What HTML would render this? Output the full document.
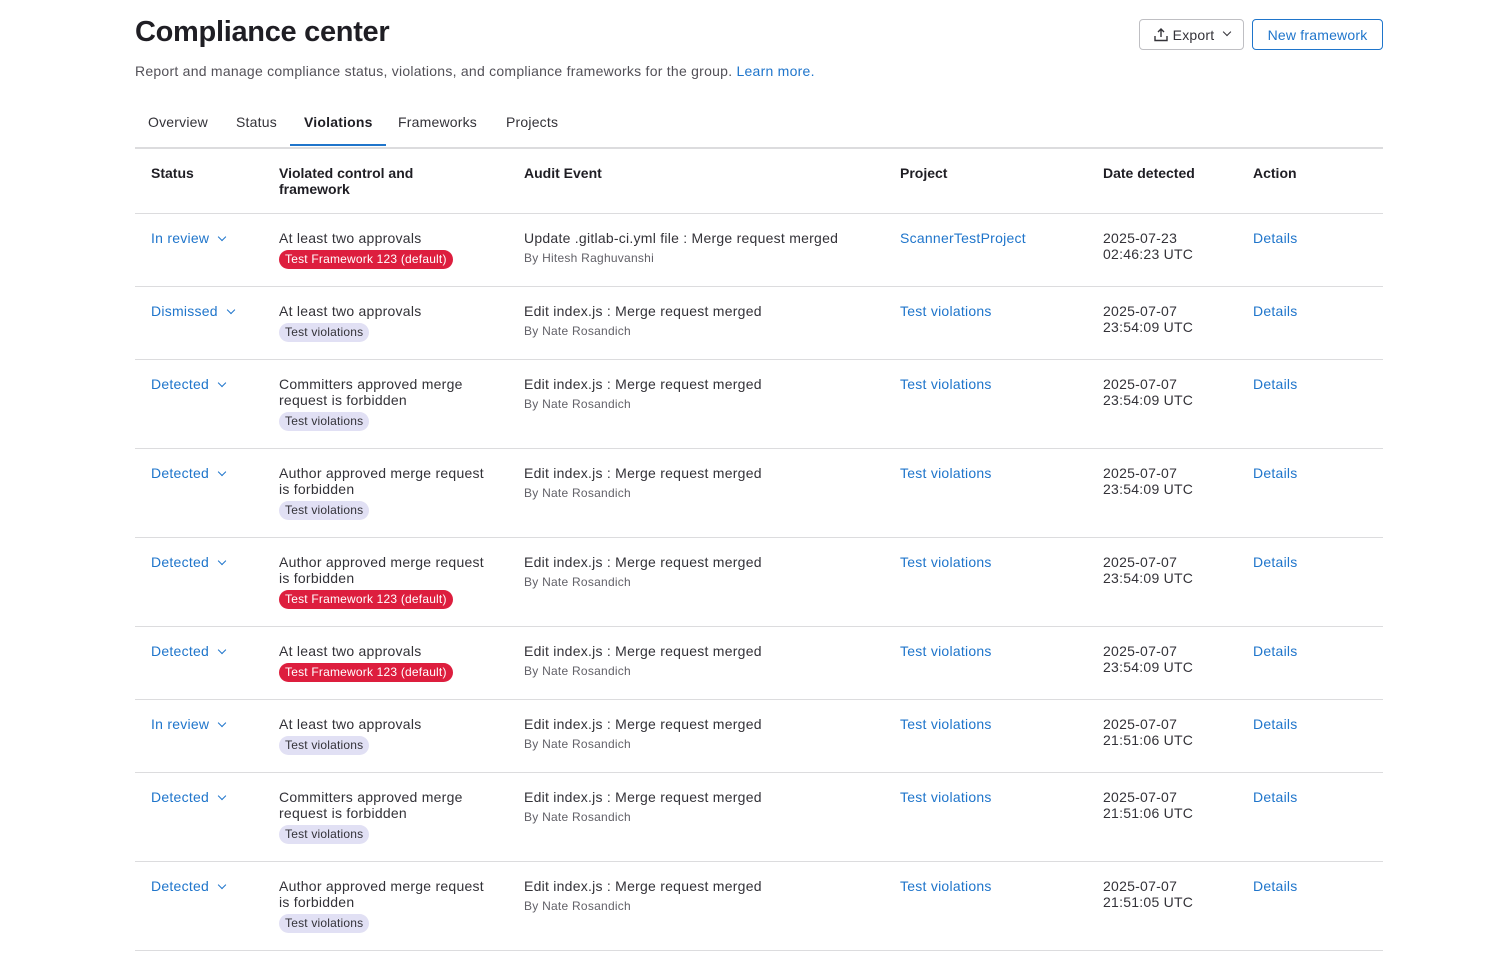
<!DOCTYPE html>
<html><head><meta charset="utf-8"><style>
body{margin:0;background:#fff;font-family:"Liberation Sans",sans-serif;color:#333238;}
.wrap{position:relative;width:1488px;height:967px;overflow:hidden}
h1{position:absolute;left:135px;top:16px;margin:0;font-size:29px;font-weight:bold;color:#1f1e24;letter-spacing:-0.3px}
.sub{position:absolute;left:135px;top:63px;font-size:14px;color:#535158;letter-spacing:0.25px}
a{color:#1f75cb;text-decoration:none}
.btn{position:absolute;top:19px;height:31px;border-radius:4px;font-size:14px;box-sizing:border-box;display:flex;align-items:center;justify-content:center;letter-spacing:0.2px}
.tabs{position:absolute;left:135px;top:112px;width:1248px;height:35px;border-bottom:2px solid #dcdcde}
.tab{position:absolute;top:2px;font-size:14px;color:#333238;letter-spacing:0.2px}
.tab.act{font-weight:bold;color:#1f1e24}
.ul{position:absolute;left:155px;top:32px;width:96px;height:2px;background:#1f75cb}
.row{position:absolute;left:135px;width:1248px;border-bottom:1px solid #dcdcde;font-size:14px;line-height:16px;letter-spacing:0.25px}
.c{position:absolute;top:16px;white-space:nowrap}
.h{font-weight:bold;color:#1f1e24;letter-spacing:0}
.by{font-size:12px;color:#626168;margin-top:4px}
.b{display:inline-block;font-size:12px;line-height:19px;padding:0 6px;border-radius:10px;margin-top:4px;letter-spacing:0.2px}
.red{background:#dd1e3e;color:#fff}
.lav{background:#e1e0f4;color:#333238}
.chev{display:inline-block;width:5px;height:5px;border-right:1.3px solid #1f75cb;border-bottom:1.3px solid #1f75cb;transform:rotate(45deg);margin-left:10px;position:relative;top:-3px}
</style></head><body><div class="wrap">
<h1>Compliance center</h1>
<div class="sub">Report and manage compliance status, violations, and compliance frameworks for the group. <a>Learn more.</a></div>
<div class="btn" style="left:1139px;width:105px;border:1px solid #bfbfc3;color:#333238">
<svg width="16" height="16" viewBox="0 0 16 16" style="margin-right:4px"><path d="M8 10V2M5 5l3-3 3 3M2 9v4.5h12V9" fill="none" stroke="#333238" stroke-width="1.4"/></svg>Export<span class="chev" style="border-color:#333238"></span></div>
<div class="btn" style="left:1252px;width:131px;border:1px solid #1f75cb;color:#1f75cb">New framework</div>
<div class="tabs">
<span class="tab" style="left:13px">Overview</span>
<span class="tab" style="left:101px">Status</span>
<span class="tab act" style="left:169px">Violations</span>
<span class="tab" style="left:263px">Frameworks</span>
<span class="tab" style="left:371px">Projects</span>
<div class="ul"></div></div>
<div class="row" style="top:149px;height:64px">
<div class="c h" style="left:16px">Status</div>
<div class="c h" style="left:144px">Violated control and<br>framework</div>
<div class="c h" style="left:389px">Audit Event</div>
<div class="c h" style="left:765px">Project</div>
<div class="c h" style="left:968px">Date detected</div>
<div class="c h" style="left:1118px">Action</div>
</div>
<div id="rows"></div>
</div>
<script>
var R=[
[214,72,"In review","At least two approvals",1,"Update .gitlab-ci.yml file : Merge request merged","By Hitesh Raghuvanshi","ScannerTestProject","2025-07-23","02:46:23 UTC"],
[287,72,"Dismissed","At least two approvals",0,"Edit index.js : Merge request merged","By Nate Rosandich","Test violations","2025-07-07","23:54:09 UTC"],
[360,88,"Detected","Committers approved merge<br>request is forbidden",0,"Edit index.js : Merge request merged","By Nate Rosandich","Test violations","2025-07-07","23:54:09 UTC"],
[449,88,"Detected","Author approved merge request<br>is forbidden",0,"Edit index.js : Merge request merged","By Nate Rosandich","Test violations","2025-07-07","23:54:09 UTC"],
[538,88,"Detected","Author approved merge request<br>is forbidden",1,"Edit index.js : Merge request merged","By Nate Rosandich","Test violations","2025-07-07","23:54:09 UTC"],
[627,72,"Detected","At least two approvals",1,"Edit index.js : Merge request merged","By Nate Rosandich","Test violations","2025-07-07","23:54:09 UTC"],
[700,72,"In review","At least two approvals",0,"Edit index.js : Merge request merged","By Nate Rosandich","Test violations","2025-07-07","21:51:06 UTC"],
[773,88,"Detected","Committers approved merge<br>request is forbidden",0,"Edit index.js : Merge request merged","By Nate Rosandich","Test violations","2025-07-07","21:51:06 UTC"],
[862,88,"Detected","Author approved merge request<br>is forbidden",0,"Edit index.js : Merge request merged","By Nate Rosandich","Test violations","2025-07-07","21:51:05 UTC"]];
var h="";R.forEach(function(r){h+='<div class="row" style="top:'+r[0]+'px;height:'+r[1]+'px">'+
'<div class="c" style="left:16px"><a>'+r[2]+'</a><span class="chev"></span></div>'+
'<div class="c" style="left:144px">'+r[3]+'<br><span class="b '+(r[4]?'red">Test Framework 123 (default)':'lav">Test violations')+'</span></div>'+
'<div class="c" style="left:389px">'+r[5]+'<div class="by">'+r[6]+'</div></div>'+
'<div class="c" style="left:765px"><a>'+r[7]+'</a></div>'+
'<div class="c" style="left:968px">'+r[8]+'<br>'+r[9]+'</div>'+
'<div class="c" style="left:1118px"><a>Details</a></div></div>';});
document.getElementById("rows").innerHTML=h;
</script>
</body></html>
